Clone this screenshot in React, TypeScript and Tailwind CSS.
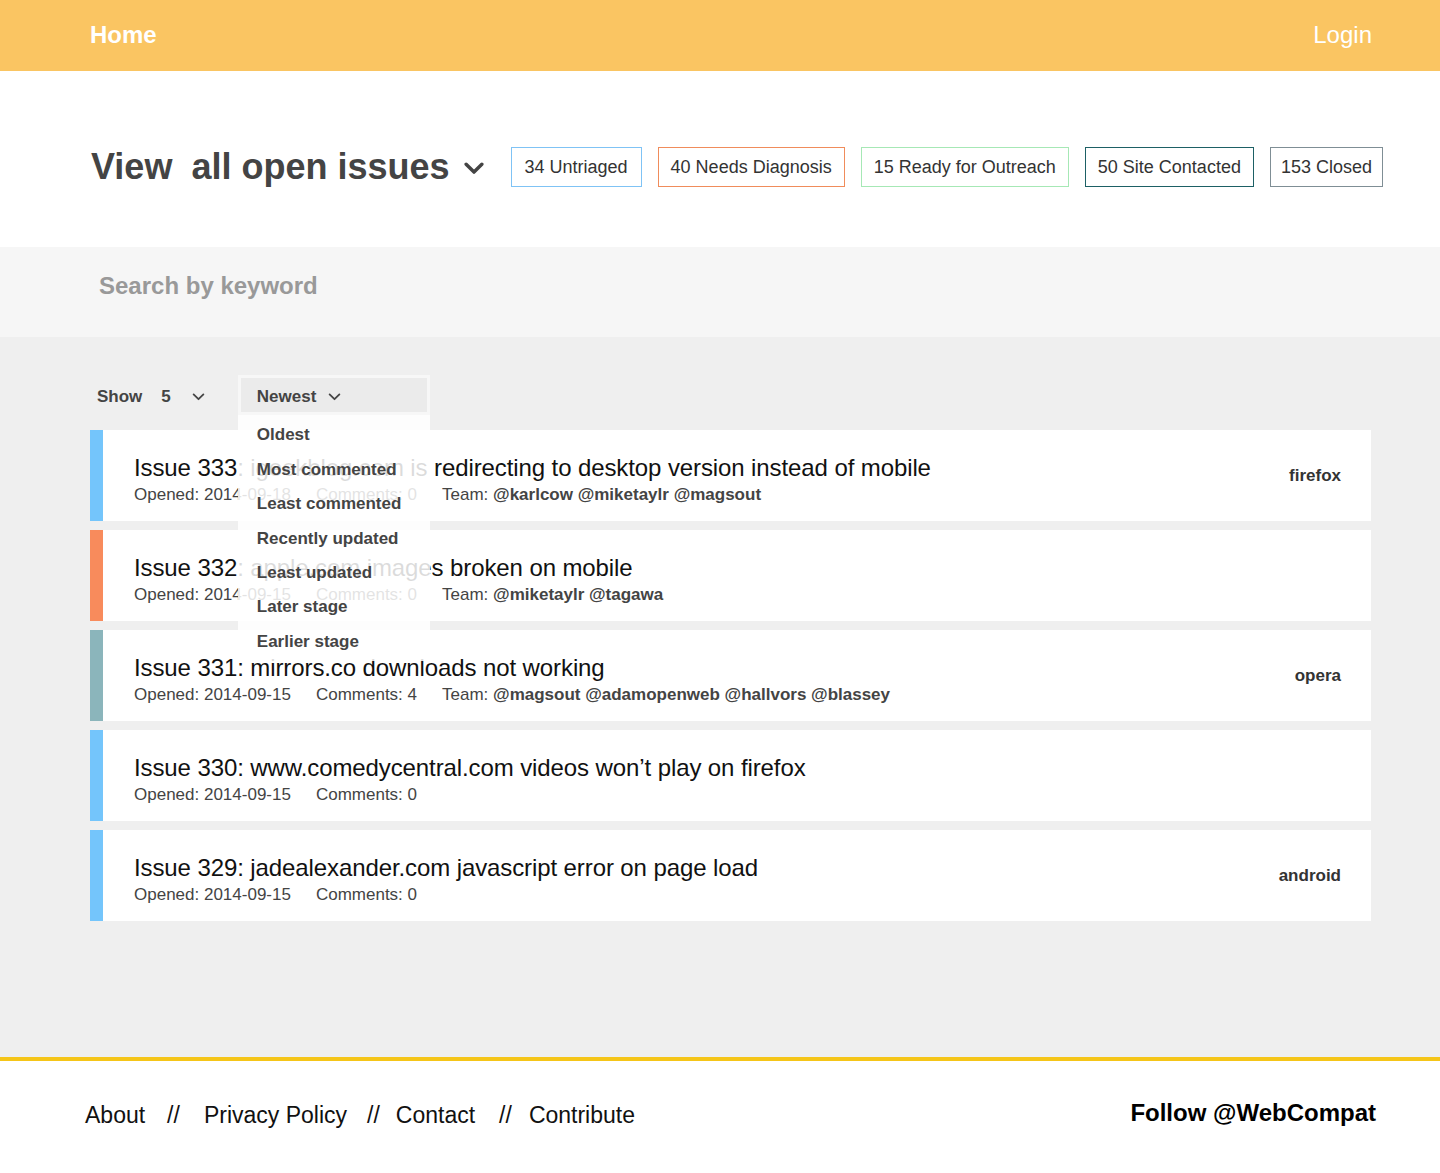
import React from "react";

const Chevron = ({ className, sw = 2 }: { className?: string; sw?: number }) => (
  <svg viewBox="0 0 14 9" className={className} fill="none" stroke="currentColor" strokeWidth={sw} strokeLinecap="round" strokeLinejoin="round">
    <path d="M1.5 1.5 L7 7 L12.5 1.5" />
  </svg>
);

type Issue = {
  num: number;
  title: string;
  opened: string;
  comments: number;
  team?: string;
  label?: string;
  color: string;
};

const issues: Issue[] = [
  { num: 333, title: "igeekblog.com is redirecting to desktop version instead of mobile", opened: "2014-09-18", comments: 0, team: "@karlcow @miketaylr @magsout", label: "firefox", color: "bg-[#74c5fb]" },
  { num: 332, title: "apple.com images broken on mobile", opened: "2014-09-15", comments: 0, team: "@miketaylr @tagawa", color: "bg-[#f88b5c]" },
  { num: 331, title: "mirrors.co downloads not working", opened: "2014-09-15", comments: 4, team: "@magsout @adamopenweb @hallvors @blassey", label: "opera", color: "bg-[#8bb5bb]" },
  { num: 330, title: "www.comedycentral.com videos won’t play on firefox", opened: "2014-09-15", comments: 0, color: "bg-[#74c5fb]" },
  { num: 329, title: "jadealexander.com javascript error on page load", opened: "2014-09-15", comments: 0, label: "android", color: "bg-[#74c5fb]" },
];

const menu = ["Oldest", "Most commented", "Least commented", "Recently updated", "Least updated", "Later stage", "Earlier stage"];

export default function App() {
  return (
    <div className="w-[1440px] min-h-[1173px] flex flex-col bg-white text-[#444]" style={{ fontFamily: '"Liberation Sans", Arial, sans-serif' }}>
      {/* Header */}
      <header className="h-[71px] bg-[#fac562] flex items-center justify-between pl-[90px] pr-[68px] pb-[1px]">
        <span className="text-white text-[24px] font-bold">Home</span>
        <span className="text-white text-[24px]">Login</span>
      </header>

      {/* Title row */}
      <section className="h-[176px] flex items-center pl-[91px] pr-[57px] pt-[16px]">
        <h1 className="text-[36px] font-bold text-[#444] flex items-center">
          <span>View</span>
          <span className="ml-[19px]">all open issues</span>
          <Chevron className="w-[20px] h-[13px] ml-[14px] mt-[3px] text-[#444]" sw={2.4} />
        </h1>
        <div className="ml-auto flex gap-[16px] text-[18px] text-[#333]">
          <span className="h-[40px] px-[13px] flex items-center border border-[#7fc3f5]">34 Untriaged</span>
          <span className="h-[40px] px-[12px] flex items-center border border-[#f08c5b]">40 Needs Diagnosis</span>
          <span className="h-[40px] px-[12px] flex items-center border border-[#a6e8b5]">15 Ready for Outreach</span>
          <span className="h-[40px] px-[12px] flex items-center border border-[#1d6065]">50 Site Contacted</span>
          <span className="h-[40px] px-[10px] flex items-center border border-[#7f8e95]">153 Closed</span>
        </div>
      </section>

      {/* Search */}
      <section className="h-[90px] bg-[#f6f6f6] flex items-center pl-[99px] pb-[12px]">
        <span className="text-[24px] font-bold text-[#999]">Search by keyword</span>
      </section>

      {/* Main */}
      <main className="bg-[#efefef] flex-1 pt-[38px] pb-[136px] pr-[69px] pl-[90px]">
        <div className="h-[40px] flex items-center text-[17px] font-bold text-[#444] relative z-10 pt-[3px]">
          <span className="ml-[7px]">Show</span>
          <span className="ml-[19px]">5</span>
          <Chevron className="w-[13px] h-[8px] ml-[21px] text-[#444]" />
          <div className="relative ml-[33px] w-[192px] -mt-[3px]">
            <div className="h-[40px] border-[3px] border-[#f7f7f7] bg-[#ebebeb] flex items-center pl-[16px] pt-[3px]">
              <span>Newest</span>
              <Chevron className="w-[13px] h-[8px] ml-[12px] text-[#444]" />
            </div>
            <div className="absolute left-0 top-[40px] w-[192px] bg-white/85 pt-[3px] pb-[2px]">
              {menu.map((m) => (
                <div key={m} className="h-[34.4px] flex items-center pl-[19px] text-[17px] font-bold text-[#444]">
                  {m}
                </div>
              ))}
            </div>
          </div>
        </div>

        <div className="mt-[15px] flex flex-col gap-[9px]">
          {issues.map((it) => (
            <div key={it.num} className="h-[91px] bg-white flex">
              <div className={`w-[13px] ${it.color}`} />
              <div className="flex-1 pl-[31px] pt-[23px]">
                <div className="text-[24px] leading-[30px] text-[#111] tracking-[-0.1px]">
                  Issue {it.num}: {it.title}
                </div>
                <div className="text-[17px] leading-[22px] text-[#444] flex mt-[1px]">
                  <span>Opened: {it.opened}</span>
                  <span className="ml-[25px]">Comments: {it.comments}</span>
                  {it.team && (
                    <span className="ml-[25px]">
                      Team: <span className="font-bold">{it.team}</span>
                    </span>
                  )}
                </div>
              </div>
              {it.label && (
                <div className="flex items-center pr-[30px] text-[17px] font-bold text-[#333]">{it.label}</div>
              )}
            </div>
          ))}
        </div>
      </main>

      <div className="h-[4px] bg-[#f5c518]" />

      {/* Footer */}
      <footer className="h-[112px] bg-white flex items-center justify-between pl-[85px] pr-[64px] pb-[9px]">
        <div className="text-[23px] text-[#111] flex items-center mt-[6px]">
          <span>About</span>
          <span className="ml-[22px] mr-[24px]">//</span>
          <span>Privacy Policy</span>
          <span className="ml-[20px] mr-[16px]">//</span>
          <span>Contact</span>
          <span className="ml-[24px] mr-[17px]">//</span>
          <span>Contribute</span>
        </div>
        <span className="text-[24px] font-bold text-black">Follow @WebCompat</span>
      </footer>
    </div>
  );
}
